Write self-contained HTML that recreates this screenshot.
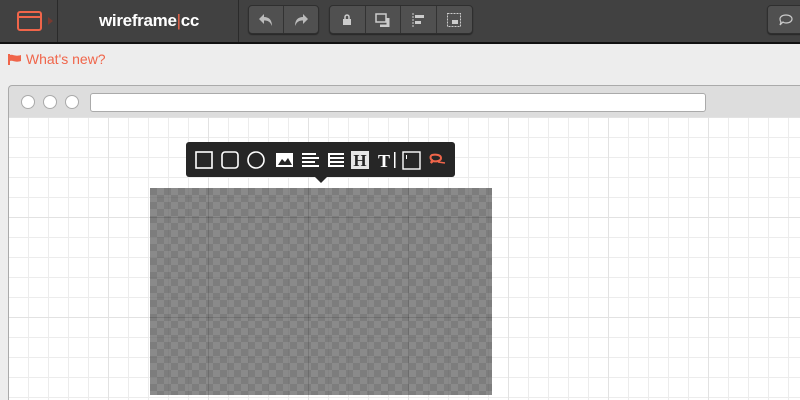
<!DOCTYPE html>
<html><head><style>
*{margin:0;padding:0;box-sizing:border-box}
html{width:800px;height:400px;overflow:hidden}
body{width:800px;height:400px;overflow:hidden;background:#ededed;font-family:"Liberation Sans",sans-serif;position:relative}
.hdr{position:absolute;left:0;top:0;width:800px;height:44px;background:#414141;border-bottom:2px solid #111}
.sep{position:absolute;top:0;width:1px;height:42px;background:#2a2a2a}
.grp{position:absolute;top:5px;height:29px;background:#505050;border:1px solid #2f2f2f;border-radius:4px;box-shadow:0 1px 1px rgba(0,0,0,.4);display:flex}
.grp div{width:36px;height:27px;border-right:1px solid #333;display:flex;align-items:center;justify-content:center}
.grp div:last-child{border-right:none}
.logo{position:absolute;left:99px;top:11px;color:#fff;font-weight:bold;font-size:17px;letter-spacing:-0.3px}
.news{position:absolute;left:8px;top:51px;color:#f0654a;font-size:14px}
.frame{position:absolute;left:8px;top:85px;width:792px;height:315px;border:1px solid #aaa;border-right:0;border-bottom:0;border-radius:4px 0 0 0;background:#ddd}
.dot{position:absolute;top:9px;width:14px;height:14px;border-radius:50%;background:#fff;border:1px solid #aaa}
.url{position:absolute;left:81px;top:7px;width:616px;height:19px;background:#fff;border:1px solid #aaa;border-radius:3px}
.canvas{position:absolute;left:9px;top:117px;width:791px;height:283px;background-color:#fff;
background-image:linear-gradient(90deg,#e2e2e2 1px,transparent 1px),linear-gradient(#e2e2e2 1px,transparent 1px),linear-gradient(90deg,#ececec 1px,transparent 1px),linear-gradient(#ececec 1px,transparent 1px);
background-size:100px 100px,100px 100px,20px 20px,20px 20px;background-position:99px 0,0 100px,19px 0,0 0}
.gray{position:absolute;left:150px;top:188px;width:342px;height:207px;background-color:#7d7d7d;
background-image:linear-gradient(45deg,#8a8a8a 25%,transparent 25%,transparent 75%,#8a8a8a 75%),linear-gradient(45deg,#8a8a8a 25%,transparent 25%,transparent 75%,#8a8a8a 75%);background-size:14px 14px;background-position:0 0,7px 7px}
.gray:after{content:"";position:absolute;left:0;top:0;right:0;bottom:0;
background-image:linear-gradient(90deg,rgba(0,0,0,.1) 1px,transparent 1px),linear-gradient(rgba(0,0,0,.1) 1px,transparent 1px),linear-gradient(90deg,rgba(0,0,0,.04) 1px,transparent 1px),linear-gradient(rgba(0,0,0,.04) 1px,transparent 1px);
background-size:100px 100px,100px 100px,20px 20px,20px 20px;background-position:58px 0,0 29px,18px 0,0 9px}
.tb{position:absolute;left:186px;top:142px;width:269px;height:35px;background:#262626;border-radius:3px}
.tb:after{content:"";position:absolute;left:129px;top:35px;border:6px solid transparent;border-top-color:#262626;border-bottom:0}
</style></head><body>
<div class="hdr">
 <svg style="position:absolute;left:17px;top:11px" width="25" height="20"><rect x="1" y="1" width="23" height="18" rx="2" fill="none" stroke="#f0654a" stroke-width="2"/><line x1="1" y1="6" x2="24" y2="6" stroke="#f0654a" stroke-width="2"/></svg>
 <svg style="position:absolute;left:48px;top:17px" width="6" height="8"><path d="M0 0L5 4L0 8Z" fill="#7a3a30"/></svg>
 <div class="sep" style="left:57px"></div>
 <div class="logo">wireframe<span style="color:#f0654a;font-weight:normal">|</span>cc</div>
 <div class="sep" style="left:238px"></div>
 <div class="grp" style="left:248px;width:71px"><div><svg width="16" height="14"><path d="M6 1L1 6L6 11V7.5C10 7.5 12 8.5 14 13C14 7 11 4 6 4Z" fill="#bbb"/></svg></div><div><svg width="16" height="14"><path d="M10 1L15 6L10 11V7.5C6 7.5 4 8.5 2 13C2 7 5 4 10 4Z" fill="#bbb"/></svg></div></div>
 <div class="grp" style="left:329px;width:144px"><div><svg width="10" height="12"><rect x="1" y="5" width="8" height="6" fill="#ccc"/><path d="M3 5V3a2 2 0 0 1 4 0V5" stroke="#ccc" fill="none" stroke-width="1.5"/></svg></div><div><svg width="16" height="14"><rect x="1" y="1" width="10" height="8" fill="none" stroke="#ccc" stroke-width="1.5"/><path d="M13 5V13H5" stroke="#ccc" stroke-width="3" fill="none"/></svg></div><div><svg width="14" height="14"><line x1="2" y1="0" x2="2" y2="14" stroke="#ccc" stroke-dasharray="2 1"/><rect x="4" y="2" width="9" height="3" fill="#ccc"/><rect x="4" y="8" width="6" height="3" fill="#ccc"/></svg></div><div><svg width="14" height="14"><rect x="0.5" y="0.5" width="13" height="13" fill="none" stroke="#ccc" stroke-dasharray="2 1"/><rect x="5" y="7" width="6" height="4" fill="#ccc"/></svg></div></div>
 <div class="grp" style="left:767px;width:40px"><div><svg width="16" height="14"><path d="M8 2C12 2 14 4 14 6S12 10 8 10C7 10 6 10 5 9L2 12L3 9C2 8 2 7 2 6C2 4 4 2 8 2Z" fill="none" stroke="#ccc" stroke-width="1.2"/></svg></div></div>
</div>
<div class="news"><svg width="14" height="11" style="vertical-align:-1px"><rect x="0" y="0" width="2" height="11" fill="#f0654a"/><path d="M2 1C5 0 7 3 13 1V7C7 9 5 6 2 7Z" fill="#f0654a"/></svg> What's new?</div>
<div class="frame"><div class="dot" style="left:12px"></div><div class="dot" style="left:34px"></div><div class="dot" style="left:56px"></div><div class="url"></div></div>
<div class="canvas"></div>
<div class="gray"></div>
<div class="tb"><svg width="269" height="35">
 <rect x="10" y="10" width="16" height="16" fill="none" stroke="#fff" stroke-width="1.6"/>
 <rect x="36" y="10" width="16" height="16" rx="3" fill="none" stroke="#fff" stroke-width="1.6"/>
 <circle cx="70" cy="18" r="8" fill="none" stroke="#fff" stroke-width="1.6"/>
 <rect x="90" y="11" width="17" height="14" fill="#fff"/><path d="M92 23L96 17L99 20L102 16L106 23Z" fill="#262626"/>
 <g fill="#fff"><rect x="116" y="11" width="14" height="2"/><rect x="116" y="15" width="17" height="2"/><rect x="116" y="19" width="13" height="2"/><rect x="116" y="23" width="17" height="2"/>
 <rect x="142" y="11" width="16" height="2"/><rect x="142" y="15" width="16" height="2"/><rect x="142" y="19" width="16" height="2"/><rect x="142" y="23" width="16" height="2"/><rect x="142" y="11" width="2" height="14"/></g>
 <rect x="165" y="9" width="18" height="18" fill="#e6e6e6"/>
 <text x="174" y="24" text-anchor="middle" font-family="Liberation Serif" font-weight="bold" font-size="17" fill="#262626">H</text>
 <text x="198" y="25" text-anchor="middle" font-family="Liberation Serif" font-weight="bold" font-size="18" fill="#fff">T</text>
 <rect x="208" y="10" width="1.5" height="16" fill="#fff"/>
 <rect x="217" y="10" width="17" height="17" fill="none" stroke="#fff" stroke-width="1.4"/><rect x="220" y="13" width="1" height="4" fill="#fff"/>
 <path d="M246 13C250 12 255 13 255 16C255 19 250 20 247 19L245 21L246 18C244 17 244 14 246 13Z" fill="none" stroke="#f0654a" stroke-width="2"/><path d="M252 20L259 21" stroke="#f0654a" stroke-width="1.5"/>
</svg></div>
</body></html>
